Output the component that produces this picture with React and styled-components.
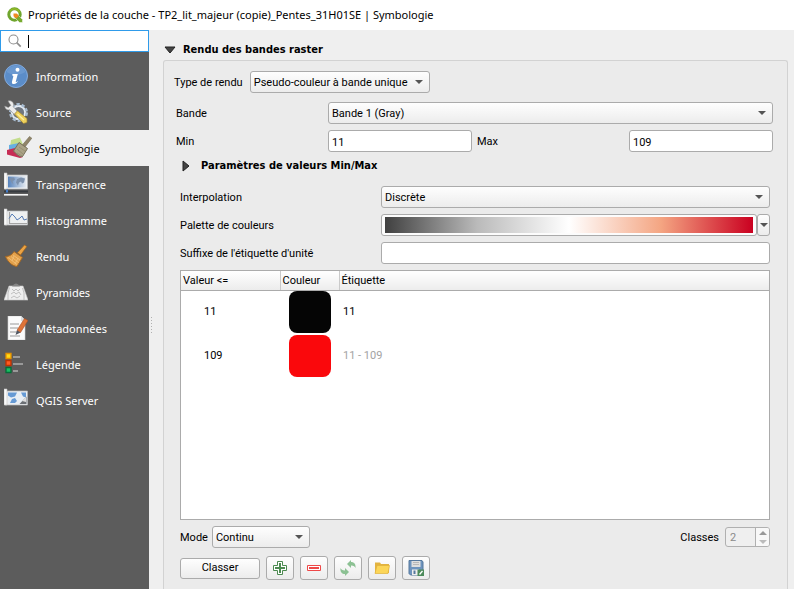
import React from 'react';
import styled, { createGlobalStyle } from 'styled-components';

const Global = createGlobalStyle`
  * { box-sizing: border-box; }
  body {
    margin: 0;
    background: #efefef;
    color: #000;
    font: 11px/14px Roboto, "Liberation Sans", sans-serif;
  }
  button, input, select { font: inherit; color: inherit; margin: 0; }
`;

const Window = styled.div`
  display: flex;
  flex-direction: column;
  min-height: 100vh;
`;
const TitleBar = styled.header`
  display: flex;
  align-items: center;
  gap: 5px;
  height: 30px;
  padding-left: 7px;
  background: #fff;
  font: 11px/16px "Noto Sans", "Open Sans", sans-serif;
  white-space: nowrap;
`;
const Title = styled.h1`
  margin: 0;
  font: inherit;
`;
const Body = styled.div`
  display: flex;
  flex: 1;
`;
const Sidebar = styled.aside`
  width: 149px;
  flex: none;
  background: #5c5c5c;
`;
const Search = styled.label`
  display: flex;
  align-items: center;
  height: 22px;
  padding-left: 7px;
  border: 1px solid #2f9bea;
  background: #fff;
`;
const Caret = styled.span`
  width: 1px;
  height: 13px;
  margin-left: 6px;
  background: #000;
`;
const SearchInput = styled.input`
  flex: 1;
  min-width: 0;
  border: 0;
  outline: 0;
  padding: 0 2px;
  background: none;
`;
const Nav = styled.nav`
  display: flex;
  flex-direction: column;
  padding-top: 6px;
`;
const NavItem = styled.a`
  display: flex;
  align-items: center;
  gap: ${p => (p.$active ? 7 : 8)}px;
  height: 36px;
  padding-left: ${p => (p.$active ? 6 : 4)}px;
  background: ${p => (p.$active ? '#efefef' : 'none')};
  color: ${p => (p.$active ? '#000' : '#fff')};
  font: 11px/16px "Noto Sans", "Open Sans", sans-serif;
  text-decoration: none;
  svg { width: ${p => (p.$active ? 26 : 24)}px; height: ${p => (p.$active ? 26 : 24)}px; flex: none; }
`;
const NavText = styled.span`
  padding-top: 2px;
`;
const Splitter = styled.div`
  display: flex;
  align-items: center;
  width: 14px;
  padding: 32px 0 0 2px;
  flex: none;
`;
const Grip = styled.span`
  width: 1px;
  height: 17px;
  background: repeating-linear-gradient(#b0b0b0 0 1px, transparent 1px 3px);
`;
const Main = styled.main`
  display: flex;
  flex-direction: column;
  flex: 1;
  min-width: 0;
  padding: 10px 6px 0 0;
`;
const SectionTitle = styled.h2`
  display: flex;
  align-items: center;
  gap: ${p => p.$gap}px;
  height: 20px;
  margin: 0 0 ${p => p.$below || 0}px;
  padding-left: ${p => p.$indent}px;
  font: bold 11px/14px "DejaVu Sans Condensed", "DejaVu Sans", sans-serif;
`;
const Group = styled.section`
  display: flex;
  flex-direction: column;
  flex: 1;
  padding: 10px 14px 9px 10px;
  border: 1px solid #d2d2d2;
  border-bottom: 0;
  border-radius: 3px 3px 0 0;
  background: #ebebeb;
`;
const Row = styled.div`
  display: flex;
  align-items: center;
`;
const TypeRow = styled(Row)`
  gap: 7px;
  margin-bottom: 9px;
`;
const Bands = styled.div`
  display: flex;
  flex-direction: column;
  gap: 6px;
  padding-left: 2px;
`;
const Details = styled.div`
  display: flex;
  flex-direction: column;
  flex: 1;
  gap: 6px;
  padding: 4px 3px 0 6px;
`;
const Label = styled.label`
  flex: none;
  width: ${p => (p.$width ? p.$width + 'px' : 'auto')};
  padding: 2px 0 0 ${p => p.$pad || 0}px;
  white-space: nowrap;
`;
const Field = styled.input`
  flex: 1;
  width: 0;
  min-width: 0;
  height: 22px;
  padding: 2px 3px 0;
  border: 1px solid #ababab;
  border-radius: 3px;
  background: #fff;
`;
const SelectBox = styled.span`
  display: grid;
  align-items: center;
  flex: ${p => (p.$width ? 'none' : 1)};
  width: ${p => (p.$width ? p.$width + 'px' : 'auto')};
  > * { grid-area: 1 / 1; }
  > svg { justify-self: end; margin-right: 7px; pointer-events: none; }
`;
const NativeSelect = styled.select`
  appearance: none;
  width: 100%;
  height: 22px;
  padding: 2px 20px 0 3px;
  border: 1px solid #ababab;
  border-radius: 3px;
  background: linear-gradient(#fefefe, #ececec);
`;
const RampRow = styled(Row)`
  flex: 1;
`;
const Ramp = styled.button`
  flex: 1;
  height: 22px;
  padding: 2px 3px;
  border: 1px solid #ababab;
  border-radius: 3px;
  background: #fcfcfc;
`;
const RampFill = styled.span`
  display: block;
  height: 16px;
  background: linear-gradient(90deg, #404040, #bababa 25%, #fff 50%, #f4a582 75%, #ca0020);
`;
const Button = styled.button`
  display: flex;
  align-items: center;
  justify-content: center;
  width: ${p => p.$width}px;
  height: ${p => p.$height}px;
  padding: 0;
  border: 1px solid #ababab;
  border-radius: 3px;
  background: linear-gradient(#fefefe, #ececec);
`;
const TableFrame = styled.div`
  flex: 1;
  border: 1px solid #ababab;
  background: #fff;
`;
const Table = styled.table`
  width: 100%;
  table-layout: fixed;
  border-collapse: collapse;
`;
const Head = styled.th`
  width: ${p => (p.$width ? p.$width + 'px' : 'auto')};
  height: 19px;
  padding: 2px 2px 0;
  border-right: 1px solid #cacaca;
  border-bottom: 1px solid #ababab;
  background: linear-gradient(#fff, #ececec);
  font-weight: 400;
  text-align: left;
  &:last-child { border-right: 0; }
`;
const Cell = styled.td`
  height: 44px;
  padding: 0 0 0 ${p => p.$pad}px;
  color: ${p => (p.$muted ? '#a3a3a3' : '#000')};
`;
const Swatch = styled.span`
  display: block;
  width: 42px;
  height: 42px;
  border-radius: 8px;
  background: ${p => p.$color};
`;
const ModeRow = styled(Row)`
  justify-content: space-between;
`;
const Pair = styled(Row)`
  gap: ${p => p.$gap}px;
`;
const Spin = styled.span`
  display: flex;
  width: 45px;
  height: 20px;
  border: 1px solid #b0b0b0;
  border-radius: 3px;
  background: #efefef;
  overflow: hidden;
`;
const SpinInput = styled.input`
  appearance: textfield;
  flex: 1;
  min-width: 0;
  padding: 1px 4px 0;
  border: 0;
  background: none;
  color: #8a8a8a;
  &::-webkit-inner-spin-button { appearance: none; margin: 0; }
`;
const SpinButtons = styled.span`
  display: flex;
  flex-direction: column;
  width: 14px;
  border-left: 1px solid #b0b0b0;
  background: #f8f8f8;
`;
const SpinButton = styled.button`
  display: flex;
  flex: 1;
  align-items: center;
  justify-content: center;
  padding: 0;
  border: 0;
  background: none;
`;
const Actions = styled(Row)`
  gap: 6px;
  padding-top: 2px;
`;

const Down = () => (
  <svg width="8" height="4" viewBox="0 0 8 4"><path d="M0 0h8L4 4z" fill="#555" /></svg>
);
const Logo = () => (
  <svg width="16" height="16" viewBox="0 0 16 16">
    <circle cx="7.500" cy="7.500" r="5.700" fill="none" stroke="#6fa52e" strokeWidth="3" />
    <path d="M2.800 4.300A5.700 5.700 0 0 1 12.800 5.500" fill="none" stroke="#93b927" strokeWidth="1.500" />
    <path d="M7.500 7.500h3l5 5v3h-3l-5-5z" fill="#78ab30" stroke="#fff" strokeWidth=".5" />
    <path d="M6.500 6.500h3.200l2.300 2.300-2.600 2.700-2.900-2.200z" fill="#f08a24" />
  </svg>
);
const Magnifier = () => (
  <svg width="14" height="14" viewBox="0 0 14 14" fill="none" stroke="#8d8d8d">
    <circle cx="5.500" cy="5.500" r="4.500" strokeWidth="1.100" /><path d="m8.700 8.700 4 4" strokeWidth="1.700" />
  </svg>
);

const InfoIcon = () => (
  <svg viewBox="0 0 24 24">
    <circle cx="12" cy="12" r="11.500" fill="#5b8dc9" stroke="#84abdc" />
    <path d="M2.500 8A10.300 10.300 0 0 1 21.500 8Q12 14 2.500 8z" fill="#76a2d6" opacity=".6" />
    <circle cx="13.500" cy="5.800" r="2" fill="#fff" />
    <path d="M8.500 10h5.300l-2 7.500c-.2 1 1 .5 2.200-.7-.5 2-2.200 3.200-4 3.200-1.700 0-2.400-1-2-2.600l1.300-5c.2-.8-.6-.9-1.200-.9z" fill="#fff" />
  </svg>
);
const SourceIcon = () => (
  <svg viewBox="0 0 24 24">
    <circle cx="14.500" cy="12.500" r="7.800" fill="#e4ebf2" />
    <circle cx="14.500" cy="12.500" r="8.200" fill="none" stroke="#a9bdd2" strokeWidth="2.600" strokeDasharray="3.200 2" />
    <circle cx="14.500" cy="12.500" r="5.600" fill="#707780" />
    <path d="M4 1c3-1 6 1 5.500 4.500l-.3 1.200 4.300 4.800-3.200 3-4.500-4.800C3.500 10.500 1 9 .7 6l3.600 1.600 2.500-2.200z" fill="#ececec" stroke="#8b8b8b" strokeWidth=".6" />
    <path d="m10.500 14 3-3.200L23 18.500v4l-3.500 1z" fill="#efd15a" stroke="#96803a" strokeWidth=".7" />
    <path d="m13.500 14 6.500 6" stroke="#fff0a0" strokeWidth="1.300" />
  </svg>
);
const SymbologyIcon = () => (
  <svg viewBox="0 0 26 26">
    <path d="m5 5 9-2.500 3 7-13 3z" fill="#c3dd8c" />
    <path d="m3 10 10-2 4 7-14 1z" fill="#66b0e2" />
    <path d="m1 15 8-2 8 9-3 1-13-3.500z" fill="#c72d55" />
    <path d="m23.500 1.500 2.300 1.700-7 9-2.600-2z" fill="#91856a" stroke="#71694f" strokeWidth=".6" />
    <path d="m13 7.500 8.500 6-5 8c-3 .8-6-2.300-9-5.500z" fill="#aaa286" stroke="#777159" />
    <path d="m11 14 6 5m-4-7 6 4m-8 2 5 3" stroke="#8d8669" strokeWidth=".7" />
  </svg>
);
const Scroll = ({ children }) => (
  <>
    <path d="M1 3h22.500v14H1z" fill="#eef0f1" stroke="#b4b7ba" strokeWidth=".7" />
    <path d="M0 1h3v16H0z" fill="#fafafa" stroke="#c2c2c2" strokeWidth=".6" />
    {children}
  </>
);
const TransparencyIcon = () => (
  <svg viewBox="0 0 24 24">
    <defs><linearGradient id="sky"><stop stopColor="#5683bd" /><stop offset="1" stopColor="#e5eaf0" /></linearGradient></defs>
    <Scroll>
      <path d="M4 4.500h18v11H4z" fill="url(#sky)" />
      <path d="m5 6 5-.5 1 2-2.500 2 1 3-2-2zm8 1 4-1.500 4 1-1 4-2 1-1-2-2 1-1 3-2-3z" fill="#7c91ad" />
    </Scroll>
    <path d="M0 18.500h24v2H0z" fill="#373b40" />
    <path d="M0 22h24v1.600H0z" fill="#f5f5f5" /><path d="M2 17.500h2v3H2z" fill="#427ac5" />
  </svg>
);
const HistogramIcon = () => (
  <svg viewBox="0 0 24 24">
    <Scroll>
      <path d="M5.500 4v11.500H23" fill="none" stroke="#a5a5a5" strokeWidth="1.200" />
      <path d="m5 10.500 3-4.500 3 3 2 3 3-2 2-2 2 4 3-1" fill="none" stroke="#557bb4" strokeWidth="1" />
    </Scroll>
  </svg>
);
const BrushIcon = () => (
  <svg viewBox="0 0 24 24">
    <path d="m20.500 1 2.300 1.600-6.300 8.500-3-2.300z" fill="#eba345" stroke="#a66617" strokeWidth=".7" />
    <path d="m10 7.500 8.500 6L13 22.500C8.500 22 4 18.500 1.500 12.500 5 12.500 8 11 10 7.500z" fill="#e3a14b" stroke="#a36724" />
    <path d="m4 13.500 9 7m-6-8 7.500 6M9 11l7 5m-8 1 2-5m1 8 3-6" stroke="#f3c27a" strokeWidth=".8" />
  </svg>
);
const PyramidIcon = () => (
  <svg viewBox="0 0 24 24">
    <path d="M5 6h14l5 14H0z" fill="#efefef" stroke="#c8c8c8" strokeWidth=".6" />
    <path d="M8 6.500q4-6 8 0z" fill="#858585" />
    <path d="M5.500 7.500 4 13v7m14.500-12L20 13v7M8 9l2 2 2-2 2 2 2-2M7 14l3-2 2 2 3-2 2 3M7 18l3-2 3 2 3-2" fill="none" stroke="#bababa" strokeWidth=".9" />
  </svg>
);
const MetadataIcon = () => (
  <svg viewBox="0 0 24 24">
    <path d="M4 0h13l4 4v20H4z" fill="#fbfbfb" stroke="#d0d0d0" strokeWidth=".6" />
    <path d="M17 0v5h4" fill="#ddd" />
    <path d="M6 8h9M6 12h8M6 16h8M6 20h10" stroke="#999" strokeWidth="1" />
    <path d="m20.500 2.500 3.500 2-7.500 12-3.500-2.200z" fill="#de7438" stroke="#a94c21" strokeWidth=".6" />
    <path d="m13 14.300 3.500 2.200-5 2.500z" fill="#4f5662" />
  </svg>
);
const LegendIcon = () => (
  <svg viewBox="0 0 24 24">
    <path d="M2 1.500h5v5H2z" fill="#ffdb18" stroke="#e59100" strokeWidth="1.300" />
    <path d="M2 8.500h5v5H2z" fill="#ff5b22" stroke="#be3200" strokeWidth="1.300" />
    <path d="M2 15.500h5v5H2z" fill="#18be62" stroke="#066c38" strokeWidth="1.300" />
    <path d="M9 5h7M9 12h10M9 19h5" stroke="#999" strokeWidth="2" />
  </svg>
);
const ServerIcon = () => (
  <svg viewBox="0 0 24 24">
    <Scroll>
      <path d="M4 4.500h18v11H4z" fill="#e8eef4" />
      <path d="m4 4.500 9 0-2 4-4 1-3-2zm13 0h5v5l-3-1zM6 15l2-4 3-1 2 3-2 2z" fill="#669ad4" />
      <path d="m22.500 8.500-7 7.500h7z" fill="#6b6f74" /><path d="m22 9-4 4 4 1z" fill="#ddd" />
    </Scroll>
  </svg>
);
const PlusIcon = () => (
  <svg width="16" height="16" viewBox="0 0 16 16">
    <path d="M5.500 1.500h5v4h4v5h-4v4h-5v-4h-4v-5h4z" fill="#fff" stroke="#4c8a50" />
    <path d="M8 3v10M3 8h10" stroke="#4c8a50" strokeWidth="2" />
  </svg>
);
const MinusIcon = () => (
  <svg width="16" height="16" viewBox="0 0 16 16">
    <path d="M1.500 5.500h13v5h-13z" fill="#fff" stroke="#ee4848" /><path d="M3 8h10" stroke="#ee4848" strokeWidth="2" />
  </svg>
);
const SyncIcon = () => (
  <svg width="16" height="16" viewBox="0 0 16 16" fill="#8cc193">
    <path d="M11 0v2c3 0 5 2 4.500 6-.7-1.700-2-2.600-4.500-2.500V8L7 4z" />
    <path d="M5 16v-2C2 14 0 12 .5 8c.7 1.700 2 2.600 4.500 2.500V8l4 4z" />
  </svg>
);
const FolderIcon = () => (
  <svg width="16" height="16" viewBox="0 0 16 16">
    <path d="M1 2.500h5l1 1.500h8V13H1z" fill="#e3b340" />
    <path d="M3 5.500h12.500l-1.500 8H1z" fill="#fcd658" stroke="#dfb23c" strokeWidth=".7" />
  </svg>
);
const SaveIcon = () => (
  <svg width="16" height="16" viewBox="0 0 16 16">
    <path d="M1 .5h13L15 2v13H2.500L1 13.500z" fill="#6e94be" stroke="#56789d" />
    <path d="M3.500 1h9v6h-9z" fill="#dedede" /><path d="M5 2.500h6M5 4.500h6" stroke="#a7a7a7" strokeWidth=".7" />
    <path d="M4 9.500h7V15H4z" fill="#efefef" /><path d="M5.500 10.500h2V14h-2z" fill="#56789d" />
    <path d="M9.500 9.500H16V16H9.500z" fill="#4d8b5b" /><path d="m11.500 14.500 3-3.500" stroke="#fff" strokeWidth="1.300" />
  </svg>
);

const sections = [
  ['Information', InfoIcon],
  ['Source', SourceIcon],
  ['Symbologie', SymbologyIcon],
  ['Transparence', TransparencyIcon],
  ['Histogramme', HistogramIcon],
  ['Rendu', BrushIcon],
  ['Pyramides', PyramidIcon],
  ['Métadonnées', MetadataIcon],
  ['Légende', LegendIcon],
  ['QGIS Server', ServerIcon],
];
const classes = [
  { value: '11', color: '#050505', label: '11' },
  { value: '109', color: '#fa080c', label: '11 - 109', muted: true },
];
const actions = [
  ['Ajouter', PlusIcon],
  ['Supprimer', MinusIcon],
  ['Actualiser', SyncIcon],
  ['Ouvrir', FolderIcon],
  ['Enregistrer', SaveIcon],
];

const Select = ({ id, value, width }) => (
  <SelectBox $width={width}>
    <NativeSelect id={id} defaultValue={value}><option>{value}</option></NativeSelect>
    <Down />
  </SelectBox>
);

export default function App() {
  return (
    <Window>
      <Global />
      <TitleBar>
        <Logo />
        <Title>Propriétés de la couche - TP2_lit_majeur (copie)_Pentes_31H01SE | Symbologie</Title>
      </TitleBar>
      <Body>
        <Sidebar>
          <Search>
            <Magnifier />
            <Caret />
            <SearchInput type="text" aria-label="Rechercher" />
          </Search>
          <Nav>
            {sections.map(([name, Icon]) => (
              <NavItem key={name} href="#" $active={name === 'Symbologie'}>
                <Icon />
                <NavText>{name}</NavText>
              </NavItem>
            ))}
          </Nav>
        </Sidebar>
        <Splitter><Grip /></Splitter>
        <Main>
          <SectionTitle $gap={7} $indent={1}>
            <svg width="12" height="8" viewBox="0 0 12 8"><path d="M1 1h10L6 7z" fill="#444" stroke="#222" /></svg>
            Rendu des bandes raster
          </SectionTitle>
          <Group>
            <TypeRow>
              <Label htmlFor="renderer">Type de rendu</Label>
              <Select id="renderer" value="Pseudo-couleur à bande unique" width={180} />
            </TypeRow>
            <Bands>
              <Row>
                <Label htmlFor="band" $width={152}>Bande</Label>
                <Select id="band" value="Bande 1 (Gray)" />
              </Row>
              <Row>
                <Label htmlFor="min" $width={152}>Min</Label>
                <Field id="min" defaultValue="11" />
                <Label htmlFor="max" $width={157} $pad={5}>Max</Label>
                <Field id="max" defaultValue="109" />
              </Row>
            </Bands>
            <Details>
              <SectionTitle $gap={11} $indent={2} $below={4}>
                <svg width="8" height="12" viewBox="0 0 8 12"><path d="M1 1v10l6-5z" fill="#444" stroke="#222" /></svg>
                Paramètres de valeurs Min/Max
              </SectionTitle>
              <Row>
                <Label htmlFor="interpolation" $width={201}>Interpolation</Label>
                <Select id="interpolation" value="Discrète" />
              </Row>
              <Row>
                <Label htmlFor="ramp" $width={201}>Palette de couleurs</Label>
                <RampRow>
                  <Ramp id="ramp" type="button"><RampFill /></Ramp>
                  <Button type="button" aria-label="Choisir une palette" $width={13} $height={22}><Down /></Button>
                </RampRow>
              </Row>
              <Row>
                <Label htmlFor="suffix" $width={201}>Suffixe de l'étiquette d'unité</Label>
                <Field id="suffix" />
              </Row>
              <TableFrame>
                <Table>
                  <thead>
                    <tr>
                      <Head $width={99}>Valeur &lt;=</Head>
                      <Head $width={59}>Couleur</Head>
                      <Head>Étiquette</Head>
                    </tr>
                  </thead>
                  <tbody>
                    {classes.map(c => (
                      <tr key={c.value}>
                        <Cell $pad={23}>{c.value}</Cell>
                        <Cell $pad={9}><Swatch $color={c.color} /></Cell>
                        <Cell $pad={4} $muted={c.muted}>{c.label}</Cell>
                      </tr>
                    ))}
                  </tbody>
                </Table>
              </TableFrame>
              <ModeRow>
                <Pair $gap={4}>
                  <Label htmlFor="mode">Mode</Label>
                  <Select id="mode" value="Continu" width={98} />
                </Pair>
                <Pair $gap={6}>
                  <Label htmlFor="classes">Classes</Label>
                  <Spin>
                    <SpinInput id="classes" type="number" defaultValue="2" disabled />
                    <SpinButtons>
                      <SpinButton type="button" aria-label="Augmenter" disabled>
                        <svg width="8" height="4" viewBox="0 0 8 4"><path d="M0 4h8L4 0z" fill="#999" /></svg>
                      </SpinButton>
                      <SpinButton type="button" aria-label="Diminuer" disabled>
                        <svg width="8" height="4" viewBox="0 0 8 4"><path d="M0 0h8L4 4z" fill="#bbb" /></svg>
                      </SpinButton>
                    </SpinButtons>
                  </Spin>
                </Pair>
              </ModeRow>
              <Actions>
                <Button type="button" $width={80} $height={21}>Classer</Button>
                {actions.map(([name, Icon]) => (
                  <Button key={name} type="button" aria-label={name} $width={28} $height={24}><Icon /></Button>
                ))}
              </Actions>
            </Details>
          </Group>
        </Main>
      </Body>
    </Window>
  );
}
